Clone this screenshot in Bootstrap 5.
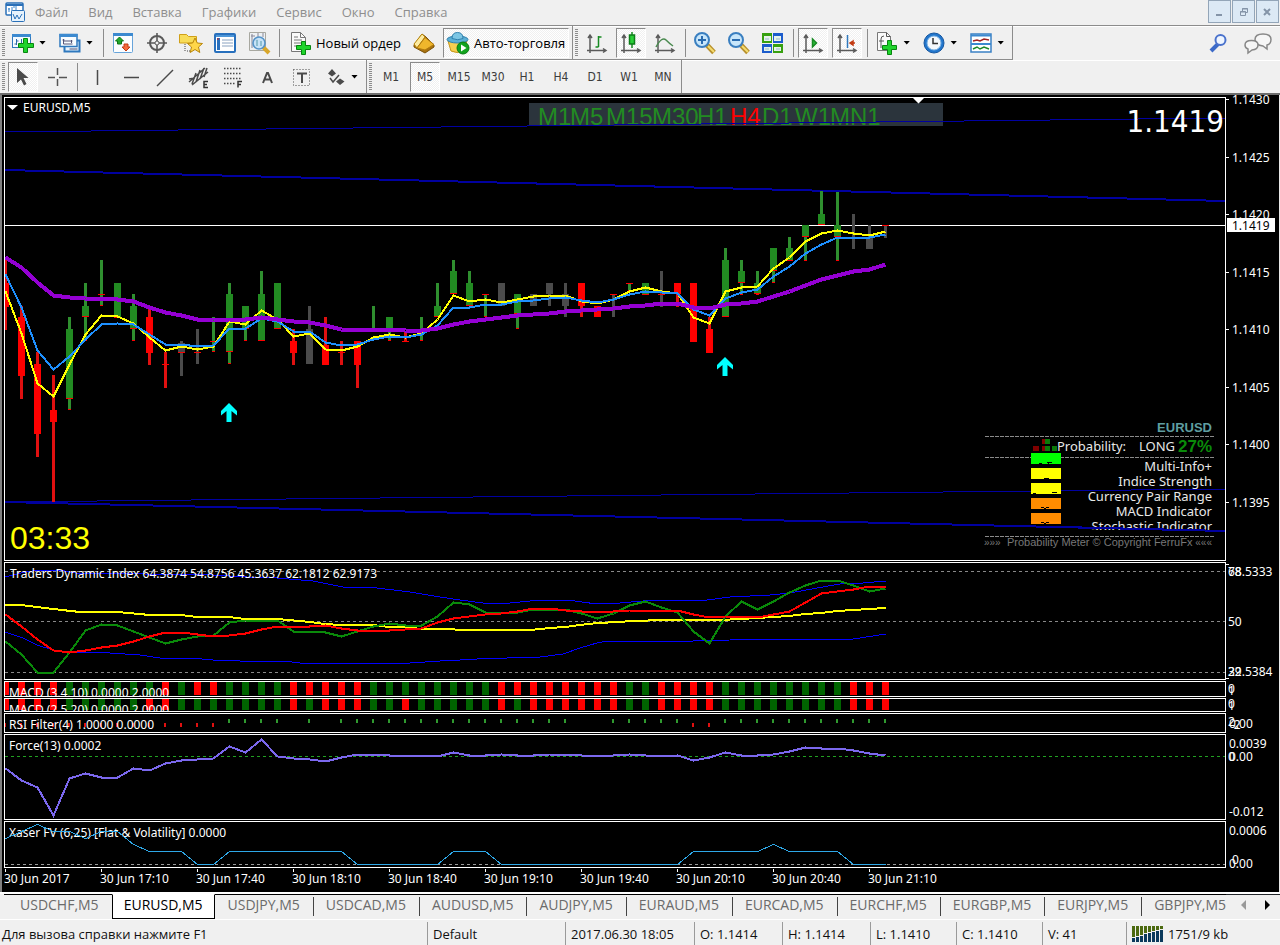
<!DOCTYPE html>
<html lang="ru">
<head>
<meta charset="utf-8">
<meta name="viewport" content="width=device-width, initial-scale=1">
<title>EURUSD,M5</title>
<link href="https://cdn.jsdelivr.net/npm/bootstrap@5.3.0/dist/css/bootstrap.min.css" rel="stylesheet">
<style>
  :root { --face: #f0f0f0; --edge: #8c8c8c; --ui: "Open Sans", "Noto Sans", sans-serif; --plot: "Noto Sans", sans-serif; --narrow: "DejaVu Sans Condensed", "Noto Sans", sans-serif; }
  body { background: var(--face); font-family: var(--ui); font-size: 13px; line-height: 20px; color: #111; }
  button { font: inherit; color: inherit; border: 0; background: none; padding: 0; }
  svg { display: block; flex: none; }

  .menu-bar { height: 26px; border-bottom: 1px solid var(--edge); padding: 0 1px 2px 5px; }
  .menu-bar a { color: #8e8e8e; text-decoration: none; padding: 0 10px; }
  .win-set { gap: 1px; }
  .win-btn { width: 23px; height: 23px; background: #dce9f5; border: 1px solid #93a5b8; color: #8494a8; }

  .tool-row { height: 34px; box-shadow: inset 0 1px #fff; }
  .tool-row.second { height: 35px; border-bottom: 2px solid #6c6c6c; }
  .tool-strip { height: 34px; border-right: 1px solid var(--edge); border-bottom: 1px solid var(--edge); padding: 0 1px 0 2px; }
  .second .tool-strip { height: 33px; border-bottom: 0; }
  .grip { width: 3px; height: 28px; margin-right: 1px; background: repeating-linear-gradient(#8c8c8c 0 1px, #f0f0f0 1px 2px); }
  .tool-strip + .tool-strip .grip { margin-right: 2px; }
  .tool-btn { width: 30px; height: 30px; margin: 0 2px; display: flex; align-items: center; justify-content: center; white-space: nowrap; }
  .tool-btn.drop { width: 43px; gap: 4px; justify-content: flex-start; padding-left: 3px; }
  .tool-btn.wide { width: auto; gap: 4px; padding: 0 4px 0 5px; }
  .tool-btn.pressed { border: 1px solid; border-color: #8c8c8c #fff #fff #8c8c8c; background: repeating-conic-gradient(#f0f0f0 0 25%, #fff 0 50%) 0 0 / 2px 2px; }
  .tool-btn.wide.pressed { padding: 0 3px 0 2px; }
  .tool-sep { width: 1px; height: 28px; margin: 0 2px 0 3px; background: var(--edge); }
  .caret { width: 7px; height: 4px; background: #000; clip-path: polygon(0 0, 100% 0, 50% 100%); }
  .order-text { font-size: 13px; color: #000; }
  .frame-btn { font-family: var(--narrow); font-size: 12px; color: #3c3c3c; }

  .terminal { background: #000; border-left: 2px solid #808080; border-right: 1px solid #e8e8e8; padding: 2px 0 0 2px; }
  .pane { margin-bottom: 1px; }
  .pane:last-of-type { margin-bottom: 0; }
  .plot { flex: 1 1 0; min-width: 0; border: 1px solid #fff; }
  .scale { width: 53px; overflow: visible; }
  .terminal text { font-family: var(--plot); font-size: 12px; fill: #fff; white-space: pre; }
  .terminal text.arial { font-family: "Liberation Sans", Arial, sans-serif; }
  .terminal text.quote { font-family: var(--narrow); font-size: 31px; }
  .terminal text.clock { font-size: 32px; fill: #ff0; }
  .terminal text.tf { font-size: 24px; fill: #228b22; }
  .terminal text.meter { font-size: 13px; fill: #e8e8e8; }
  .crisp { shape-rendering: crispEdges; }
  .dates { height: 23px; overflow: hidden; }
  .dates span { position: relative; flex: none; width: 96px; font-family: var(--plot); font-size: 12px; line-height: 20px; color: #fff; white-space: nowrap; }
  .dates span::before { content: ""; position: absolute; left: 1px; top: 0; width: 1px; height: 3px; background: #fff; }

  .tab-strip { border-top: 2px solid #fff; border-bottom: 1px solid #fff; height: 28px; overflow: hidden; }
  .chart-tab { border-top: 1px solid #000; height: 25px; padding: 0 13px 4px; color: #6b6b6b; font-size: 14px; line-height: 20px; position: relative; white-space: nowrap; }
  .chart-tab + .chart-tab::before { content: ""; position: absolute; left: 0; top: 2px; width: 1px; height: 19px; background: #444; }
  .chart-tab.active { background: #fff; color: #000; border: 1px solid #000; border-top-color: #fff; padding: 0 11px 3px; }
  .chart-tab.active::before, .chart-tab.active + .chart-tab::before { display: none; }
  .status { height: 26px; line-height: 24px; overflow: hidden; }
  .status > div { border-left: 1px solid #9a9a9a; padding-left: 5px; white-space: nowrap; height: 24px; }
  .status > div:first-child { border-left: 0; padding-left: 2px; }
  .w-def { width: 138px; } .w-time { width: 129px; } .w-val { width: 88px; } .w-low { width: 86px; } .w-vol { width: 84px; } .w-net { width: 154px; }
</style>
</head>
<body class="d-flex flex-column min-vh-100">

<nav class="menu-bar d-flex align-items-center">
  <svg width="20" height="22" viewBox="0 0 20 22"><rect x="1" y="2" width="17" height="12" rx="1" fill="#fff" stroke="#2a70b8" stroke-width="1.500"/><path d="M1 4h17" stroke="#2a70b8" stroke-width="2"/><path d="M4 7v4m3-5v5m4-6v5m-8-2h2m3-2h2" stroke="#3d86cc"/><rect x="6.500" y="9.500" width="13" height="11" rx="1" fill="#e6f2fc" stroke="#2a70b8"/><path d="M8 13l2 5 2-4 2 4 3-5" fill="none" stroke="#2a70b8"/></svg>
  <a href="#">Файл</a><a href="#">Вид</a><a href="#">Вставка</a><a href="#">Графики</a><a href="#">Сервис</a><a href="#">Окно</a><a href="#">Справка</a>
  <div class="win-set d-flex ms-auto">
    <button class="win-btn" aria-label="Свернуть"><svg width="21" height="21"><path d="M7 14h6" stroke="currentColor" stroke-width="2"/></svg></button>
    <button class="win-btn" aria-label="Восстановить"><svg width="21" height="21" fill="none" stroke="currentColor"><path d="M9.500 10V7.500h5v4H13M9 8h6"/><path d="M7.500 10.500h5v4h-5zM7 11h6"/></svg></button>
    <button class="win-btn" aria-label="Закрыть"><svg width="21" height="21"><path d="M7 8l6 6m0-6l-6 6" stroke="currentColor" stroke-width="2"/></svg></button>
  </div>
</nav>

<div class="tool-row d-flex">
  <div class="tool-strip d-flex align-items-center">
    <span class="grip"></span>
    <button class="tool-btn drop" aria-label="Новый график"><svg width="24" height="24"><rect x="1.500" y="3.500" width="18" height="13" fill="#f4faff" stroke="#2f78bd"/><path d="M1 4.500h19" stroke="#3c8ad0" stroke-width="3"/><path d="M5.500 8v6m-2-1h2m0-3h2M10.500 8v4" stroke="#2f6aa5"/><path d="M12.500 7.500h4v5h6v4h-6v5h-4v-5h-5v-4h5z" fill="#1fd42c" stroke="#07850f"/></svg><span class="caret"></span></button>
    <button class="tool-btn drop" aria-label="Профили"><svg width="24" height="24"><rect x="6.500" y="9.500" width="15" height="11" fill="#e8f3fd" stroke="#2f78bd" stroke-width="2"/><rect x="2" y="3.500" width="17" height="12" fill="#f8fcff" stroke="#2f78bd" stroke-width="1.500"/><path d="M1.500 4.500h18" stroke="#3c8ad0" stroke-width="3"/><path d="M5.500 8v5m-1-4h2m-1 4h9m-1-4v3m-8-2h9m-3 8h8" stroke="#557" fill="none"/></svg><span class="caret"></span></button>
    <span class="tool-sep"></span>
    <button class="tool-btn" aria-label="Обзор рынка"><svg width="24" height="24"><rect x="2.500" y="2.500" width="19" height="19" rx="1" fill="#fbfdff" stroke="#67a4da"/><path d="M2 3.500h20" stroke="#3c8ad0" stroke-width="3"/><path d="M8.500 6l4 4h-2v3h-4v-3h-2z" fill="#22a82e" stroke="#0c7415"/><path d="M15 20l4-4h-2v-3h-4v3h-2z" fill="#f46a3c" stroke="#c23a12"/></svg></button>
    <button class="tool-btn" aria-label="Навигация"><svg width="24" height="24" fill="none" stroke="#5a5a5a"><circle cx="12" cy="12" r="7" stroke-width="2"/><path d="M12 2v8m0 4v8M2 12h8m4 0h8" stroke-width="1.600"/><circle cx="12" cy="12" r="2"/></svg></button>
    <button class="tool-btn" aria-label="Навигатор"><svg width="26" height="24"><path d="M1.500 12V3.500h7l2 2h8V12z" fill="#f8dc58" stroke="#d0a018"/><path d="M7 13v8m2-1h4" stroke="#444" stroke-dasharray="1 1"/><path d="M17 7l2.300 5 5.200.5-4 3.500 1.300 5.500-4.800-3-4.800 3 1.300-5.500-4-3.500 5.200-.5z" fill="#ffd648" stroke="#b8860b"/></svg></button>
    <button class="tool-btn" aria-label="Терминал"><svg width="24" height="24"><rect x="2" y="3" width="20" height="18" rx="1" fill="#fff" stroke="#2870bd" stroke-width="2"/><path d="M3 5h18" stroke="#4d96d8" stroke-width="2"/><path d="M5.500 7v12" stroke="#2870bd" stroke-width="3"/><path d="M9 9h11M9 12h11M9 15h11" stroke="#8aa2c0"/><path d="M4 8h2" stroke="#c22"/></svg></button>
    <button class="tool-btn" aria-label="Тестер стратегий"><svg width="24" height="24"><path d="M2.500 1.500h16v18h-16z" fill="#eef1f3" stroke="#a8a8a0"/><path d="M4 5h4m-1 4h4M5 3v14m6-15v5m5-5v4" stroke="#889"/><path d="M16 16l6 6" stroke="#d9a72b" stroke-width="4"/><circle cx="12" cy="12" r="6" fill="#bfe0f7" fill-opacity=".85" stroke="#5593c8" stroke-width="1.600"/><path d="M10 9v6m4-5v5" stroke="#59a"/></svg></button>
    <span class="tool-sep"></span>
    <button class="tool-btn wide"><svg width="23" height="24"><path d="M2.500 1.500h9l5 5v14h-14z" fill="#fafafa" stroke="#777"/><path d="M11.500 1.500v5h5M5 6h4M5 9h8M5 12h7M5 15h4" fill="none" stroke="#777"/><path d="M12.500 10.500h4v4h5v4h-5v5h-4v-5h-5v-4h5z" fill="#1fd42c" stroke="#07850f"/></svg><span class="order-text">Новый ордер</span></button>
    <button class="tool-btn" aria-label="MetaEditor"><svg width="24" height="24"><path d="M2 14l8-11 4 3 8 8v2l-9 6-11-6z" fill="#a8720f" stroke="#7c5208"/><path d="M2 13L10 3l3 3-8 11z" fill="#fdeba0" stroke="#b8860b"/><path d="M5 17l8-10.500 9 7L13 19z" fill="#efb62c" stroke="#b07a10"/></svg></button>
    <button class="tool-btn wide pressed"><svg width="24" height="24"><path d="M2 10l3 10q6 3 12 0l4-10z" fill="#f7cf50" stroke="#c4941c"/><ellipse cx="11.500" cy="8.500" rx="10.500" ry="3.500" fill="#5bb0d6" stroke="#3080ad"/><path d="M6 7.500q0-6 5.500-6t5.500 6q-5 2.500-11 0z" fill="#7cc6e4" stroke="#3080ad"/><circle cx="17" cy="17" r="6" fill="#12a31e" stroke="#077b10"/><path d="M15 13.500v7l5.500-3.500z" fill="#fff"/></svg><span class="order-text">Авто-торговля</span></button>
  </div>
  <div class="tool-strip d-flex align-items-center">
    <span class="grip"></span>
    <button class="tool-btn" aria-label="Бары"><svg width="24" height="24" fill="none" stroke="#5a5a5a" stroke-width="1.500"><path d="M5 5v17M2 19.500h18M3 7l2-3 2 3M18 17.500l3 2-3 2"/><path d="M13.500 5v11m-3 0h3m0-10h3" stroke="#178a22"/></svg></button>
    <button class="tool-btn pressed" aria-label="Свечи"><svg width="24" height="24" fill="none" stroke="#5a5a5a" stroke-width="1.500"><path d="M5 5v17M2 19.500h18M3 7l2-3 2 3M18 17.500l3 2-3 2"/><path d="M13 1v16" stroke="#178a22"/><rect x="10.500" y="4" width="5" height="9" fill="#2ad038" stroke="#0c7d18"/></svg></button>
    <button class="tool-btn" aria-label="Линия"><svg width="24" height="24" fill="none" stroke="#5a5a5a" stroke-width="1.500"><path d="M5 5v17M2 19.500h18M3 7l2-3 2 3M18 17.500l3 2-3 2"/><path d="M3 16Q9 5 13 9t7 6" stroke="#4a8a50"/></svg></button>
    <span class="tool-sep"></span>
    <button class="tool-btn" aria-label="Увеличить"><svg width="24" height="24"><path d="M14 14l7 7.500" stroke="#b8902c" stroke-width="5"/><path d="M15 15l6 6" stroke="#f5dc70" stroke-width="2"/><circle cx="9" cy="9" r="7" fill="#c8e6fa" stroke="#3a7fc0" stroke-width="2"/><path d="M5 9h8M9 5v8" stroke="#2a6cb0" stroke-width="2"/></svg></button>
    <button class="tool-btn" aria-label="Уменьшить"><svg width="24" height="24"><path d="M14 14l7 7.500" stroke="#b8902c" stroke-width="5"/><path d="M15 15l6 6" stroke="#f5dc70" stroke-width="2"/><circle cx="9" cy="9" r="7" fill="#c8e6fa" stroke="#3a7fc0" stroke-width="2"/><path d="M5 9h8" stroke="#2a6cb0" stroke-width="2"/></svg></button>
    <button class="tool-btn" aria-label="Упорядочить окна"><svg width="24" height="24"><path d="M1 2h10v10H1zM12 13h10v9H12z" fill="#37a010"/><path d="M12 2h10v10H12zM1 13h10v9H1z" fill="#1c5ccc"/><path d="M3 5h7v5H3zM13 5h7v5h-7zM3 16h7v4H3zM13 16h7v4h-7z" fill="#e6f2ea"/><path d="M4 8h4m7 0h4M4 18h4m7 0h4" stroke="#9bc"/></svg></button>
    <span class="tool-sep"></span>
    <button class="tool-btn pressed" aria-label="Автопрокрутка"><svg width="24" height="24" fill="none" stroke="#5a5a5a" stroke-width="1.500"><path d="M5 5v17M2 19.500h18M3 7l2-3 2 3M18 17.500l3 2-3 2"/><path d="M11.500 8v8l4-4z" fill="#2ab838" stroke="#178a22"/></svg></button>
    <button class="tool-btn pressed" aria-label="Сдвиг графика"><svg width="24" height="24" fill="none" stroke="#5a5a5a" stroke-width="1.500"><path d="M5 5v17M2 19.500h18M3 7l2-3 2 3M18 17.500l3 2-3 2"/><path d="M12.500 4v13" stroke="#2f78bd"/><path d="M20 12h-5m3-2l-3 2 3 2z" fill="#c23a12" stroke="#c23a12"/></svg></button>
    <span class="tool-sep"></span>
    <button class="tool-btn drop" aria-label="Индикаторы"><svg width="24" height="24"><path d="M2.500 1.500h9l4 4v14h-13z" fill="#fafafa" stroke="#777"/><path d="M11.500 1.500v4h4M6 17V8q0-3 3-3M4 10h5" fill="none" stroke="#555"/><path d="M12.500 9.500h4v5h5v4h-5v5h-4v-5h-5v-4h5z" fill="#1fd42c" stroke="#07850f"/></svg><span class="caret"></span></button>
    <button class="tool-btn drop" aria-label="Периоды"><svg width="24" height="24"><circle cx="12" cy="12" r="10" fill="#2276cc" stroke="#1757a0"/><circle cx="12" cy="12" r="7" fill="#f4f8fc" stroke="#7db4e6"/><path d="M11 7v5.500h5" fill="none" stroke="#333" stroke-width="1.500"/></svg><span class="caret"></span></button>
    <button class="tool-btn drop" aria-label="Шаблоны"><svg width="24" height="24"><rect x="2" y="3" width="20" height="18" fill="#fff" stroke="#3a80c4" stroke-width="1.500"/><path d="M2 4.500h20M2 13h20" stroke="#3c8ad0" stroke-width="2"/><path d="M4 10l4-1 3 1 4-2 5 1" fill="none" stroke="#a02020" stroke-width="1.500"/><path d="M4 18l4-2 3 2 4-2 5 2" fill="none" stroke="#1c8a28" stroke-width="1.500"/></svg><span class="caret"></span></button>
  </div>
  <div class="ms-auto d-flex align-items-center me-2 gap-3">
    <button aria-label="Поиск"><svg width="20" height="22"><path d="M10 12l-7 7" stroke="#3c6ac8" stroke-width="4"/><circle cx="12.500" cy="8" r="5" fill="#eef5ff" stroke="#4a72cc" stroke-width="2"/></svg></button>
    <button aria-label="Чат"><svg width="28" height="24" fill="#f6f6f6" stroke="#888" stroke-width="1.500"><path d="M19 15l4 3v-4q4-1 4-5.500Q27 3 19 3t-8 5.500T19 15z"/><path d="M8 19l-4 3v-4q-3-1-3-4 0-4.500 6.500-4.500T14 14t-6 5z"/></svg></button>
  </div>
</div>

<div class="tool-row second d-flex">
  <div class="tool-strip d-flex align-items-center">
    <span class="grip"></span>
    <button class="tool-btn pressed" aria-label="Курсор"><svg width="24" height="24"><path d="M6 3v15l4-3.500 3 6 2.500-1.500-3-6h5z" fill="#4a4a4a"/></svg></button>
    <button class="tool-btn" aria-label="Перекрестие"><svg width="24" height="24"><path d="M12.500 3v7m0 4v7M3 12.500h7m4 0h8" stroke="#555" stroke-width="1.500"/></svg></button>
    <span class="tool-sep"></span>
    <button class="tool-btn" aria-label="Вертикальная линия"><svg width="24" height="24"><path d="M12.500 5v15" stroke="#4a4a4a" stroke-width="1.500"/></svg></button>
    <button class="tool-btn" aria-label="Горизонтальная линия"><svg width="24" height="24"><path d="M5 12.500h15" stroke="#4a4a4a" stroke-width="1.500"/></svg></button>
    <button class="tool-btn" aria-label="Трендовая линия"><svg width="24" height="24"><path d="M4 21L20 5" stroke="#4a4a4a" stroke-width="1.500"/></svg></button>
    <button class="tool-btn" aria-label="Канал"><svg width="24" height="24"><path d="M2 17L18 3M5 20L21 7M9 8l-4 11M13 5L9 17m8-14l-4 11m7-11l-3 9M2 14l6-1" stroke="#4a4a4a" stroke-width="1.500" fill="none"/><path d="M21 16.500h-4v6h4m-4-3h3" stroke="#333" stroke-width="1.500" fill="none"/></svg></button>
    <button class="tool-btn" aria-label="Фибоначчи"><svg width="24" height="24"><path d="M3 3.500h17M3 8.500h17M3 13.500h17M3 18.500h11" stroke="#4a4a4a" stroke-width="1.500" stroke-dasharray="1.500 1.500"/><path d="M21 16.500h-4v6m0-3h3" stroke="#333" stroke-width="1.500" fill="none"/></svg></button>
    <button class="tool-btn" aria-label="Текст"><svg width="24" height="24"><path d="M8 18l4-10h1l4 10M9.500 14.500h6" stroke="#4a4a4a" stroke-width="2" fill="none"/></svg></button>
    <button class="tool-btn" aria-label="Метка"><svg width="24" height="24"><rect x="4.500" y="4.500" width="16" height="16" fill="none" stroke="#4a4a4a" stroke-dasharray="1 2"/><path d="M8 8.500h10M13 8v10" stroke="#4a4a4a" stroke-width="2"/></svg></button>
    <button class="tool-btn drop" aria-label="Стрелки"><svg width="24" height="24"><path d="M9 4l4 4.500-4 3-4-3zM17 20l-4-3.500 4-3 4.500 3z" fill="#4a4a4a"/><path d="M7 13l3 4 6-7" fill="none" stroke="#4a4a4a" stroke-width="1.500"/></svg><span class="caret"></span></button>
  </div>
  <div class="tool-strip d-flex align-items-center">
    <span class="grip"></span>
    <button class="tool-btn frame-btn">M1</button><button class="tool-btn frame-btn pressed">M5</button><button class="tool-btn frame-btn">M15</button><button class="tool-btn frame-btn">M30</button><button class="tool-btn frame-btn">H1</button><button class="tool-btn frame-btn">H4</button><button class="tool-btn frame-btn">D1</button><button class="tool-btn frame-btn">W1</button><button class="tool-btn frame-btn">MN</button>
  </div>
</div>

<main class="terminal">
  <!-- every pane draws in one shared coordinate space; each group is shifted to its own frame -->
  <div class="pane d-flex"><svg class="plot" height="464"><g id="price" transform="translate(-5,-98)"></g>
    <svg x="100%" width="1" height="100%" overflow="visible"><g id="meter" transform="translate(-1225,-98)"></g></svg></svg>
    <svg class="scale" height="464"><g id="priceScale" transform="translate(-1226,-97)"></g></svg></div>
  <div class="pane d-flex"><svg class="plot" height="118"><g id="tdi" transform="translate(-5,-563)"></g></svg><svg class="scale" height="118"><g id="tdiScale" transform="translate(-1226,-562)"></g></svg></div>
  <div class="pane d-flex"><svg class="plot" height="16"><g id="macdA" transform="translate(-5,-682)"></g></svg><svg class="scale" height="16"><g id="macdAScale" transform="translate(-1226,-681)"></g></svg></div>
  <div class="pane d-flex"><svg class="plot" height="14"><g id="macdB" transform="translate(-5,-699)"></g></svg><svg class="scale" height="14"><g id="macdBScale" transform="translate(-1226,-698)"></g></svg></div>
  <div class="pane d-flex"><svg class="plot" height="20"><g id="rsi" transform="translate(-5,-714)"></g></svg><svg class="scale" height="20"><g id="rsiScale" transform="translate(-1226,-713)"></g></svg></div>
  <div class="pane d-flex"><svg class="plot" height="86"><g id="force" transform="translate(-5,-735)"></g></svg><svg class="scale" height="86"><g id="forceScale" transform="translate(-1226,-734)"></g></svg></div>
  <div class="pane d-flex"><svg class="plot" height="47"><g id="xaser" transform="translate(-5,-822)"></g></svg><svg class="scale" height="47"><g id="xaserScale" transform="translate(-1226,-821)"></g></svg></div>
  <div class="dates d-flex"><span>30 Jun 2017</span><span>30 Jun 17:10</span><span>30 Jun 17:40</span><span>30 Jun 18:10</span><span>30 Jun 18:40</span><span>30 Jun 19:10</span><span>30 Jun 19:40</span><span>30 Jun 20:10</span><span>30 Jun 20:40</span><span>30 Jun 21:10</span></div>
</main>

<div class="tab-strip d-flex" role="tablist">
  <button class="chart-tab ps-3 ms-1">USDCHF,M5</button><button class="chart-tab active">EURUSD,M5</button><button class="chart-tab">USDJPY,M5</button><button class="chart-tab">USDCAD,M5</button><button class="chart-tab">AUDUSD,M5</button><button class="chart-tab">AUDJPY,M5</button><button class="chart-tab">EURAUD,M5</button><button class="chart-tab">EURCAD,M5</button><button class="chart-tab">EURCHF,M5</button><button class="chart-tab">EURGBP,M5</button><button class="chart-tab">EURJPY,M5</button><button class="chart-tab pe-0">GBPJPY,M5</button>
  <div class="flex-fill d-flex align-items-center justify-content-end border-top border-dark gap-3 pb-1 pe-2">
    <button aria-label="Назад"><svg width="8" height="10"><path d="M6 0v10L1 5z" fill="#999"/></svg></button>
    <button aria-label="Вперёд"><svg width="8" height="10"><path d="M1 0v10l5-5z" fill="#000"/></svg></button>
  </div>
</div>

<footer class="status d-flex align-items-end">
  <div class="flex-fill">Для вызова справки нажмите F1</div>
  <div class="w-def">Default</div><div class="w-time">2017.06.30 18:05</div><div class="w-val">O: 1.1414</div><div class="w-val">H: 1.1414</div><div class="w-low">L: 1.1410</div><div class="w-low">C: 1.1410</div><div class="w-vol">V: 41</div>
  <div class="w-net d-flex align-items-center gap-1"><svg width="32" height="18" id="net"></svg><span>1751/9 kb</span></div>
</footer>

<script src="https://cdn.jsdelivr.net/npm/bootstrap@5.3.0/dist/js/bootstrap.bundle.min.js"></script>
<script>
const $ = id => document.getElementById(id);
const put = (id, html) => $(id).insertAdjacentHTML('beforeend', html);
const rect = (x, y, w, h, f) => `<rect class="crisp" x="${x}" y="${y}" width="${w}" height="${h}" fill="${f}"/>`;
const poly = (pts, c, w) => `<polyline class="crisp" points="${pts.join(' ')}" fill="none" stroke="${c}" stroke-width="${w}"/>`;
const text = (x, y, s, cls = '', extra = '') => `<text x="${x}" y="${y}" class="${cls}" ${extra}>${s}</text>`;
const series = ys => ys.map((y, i) => `${5.5 + 16 * i},${y + .5}`);
const line = (x1, y1, x2, y2, c, w) => `<line class="crisp" x1="${x1}" y1="${y1}" x2="${x2}" y2="${y2}" stroke="${c}" stroke-width="${w}"/>`;
const level = (y, c) => `<line class="crisp" x1="5" y1="${y + .5}" x2="6000" y2="${y + .5}" stroke="${c}" stroke-dasharray="3 3"/>`;
const G = '#228b22', R = '#ff0000', K = '#4b4b4b';

/* colour, wick top, wick bottom, body top, body bottom, dash */
const candles = [
 [R,260,330,283,307],[R,306,399,317,376],[R,352,457,364,434],[R,375,502,410,422],[G,317,410,329,399],[G,283,341,306,317],[G,260,306,0,0,294],[G,283,318,283,318],
 [G,294,341,306,329],[R,309,365,317,353],[R,352,388,0,0,364],[K,341,376,343,352,352],[K,329,364,0,0,352],[G,317,352,0,0,341],[G,283,364,294,352],[G,306,341,306,329],
 [G,271,341,294,341],[G,283,329,283,329],[R,329,365,341,353],[K,306,364,329,364],[R,317,365,345,365],[R,341,365,0,0,352],[R,341,388,341,365],[G,306,329],
 [G,317,341,317,329],[R,331,341,0,0,341],[G,317,341],[G,283,317,306,317],[G,260,294,271,294],[G,271,306,283,306],[G,294,317,0,0,294],[K,283,306,283,306],
 [G,294,329,294,314],[K,294,306,294,306],[K,283,306,283,294],[K,283,317,294,306],[R,283,317,283,306],[R,306,317,306,317],[K,294,317,0,0,294],[G,283,291,0,0,283],
 [G,283,295,283,295],[K,271,307,0,0,294],[R,283,307,283,294],[R,283,342,283,342],[R,317,353,329,353],[G,248,317,260,317],[G,260,295,271,283],[G,271,295,283,294],
 [G,248,283,248,271],[G,237,261,248,261],[G,225,261,225,237],[G,191,225,214,225],[G,192,261,225,237],[K,214,249],[K,225,249,237,249],[K,225,238,0,0,225]];

let s = rect(529, 103, 414, 23, '#2b343c');
[[538,'M1'],[570,'M5'],[606,'M15'],[652,'M30'],[697,'H1'],[730,'H4'],[762,'D1'],[795,'W1'],[830,'MN1']].forEach(([x, t]) =>
  s += text(x, 125, t, 'arial tf', t === 'H4' ? 'style="fill:#f00"' : ''));
s += line(5, 132, 1225, 118, '#0000a0', 1) + line(5, 170, 1225, 201, '#0000a0', 2) + line(5, 502, 1225, 489, '#0000a0', 1) + line(5, 502, 1225, 531, '#0000a0', 2);
s += rect(5, 225, 6000, 1, '#fff');
candles.forEach(([c, a, b, t, u, d], i) => {
  const x = 5 + 16 * i, wick = c === R ? '#e01010' : c === G ? '#2f8f2f' : c;
  s += rect(x - 1, a, 3, b - a, wick);
  if (t) s += rect(x - 3, t, 7, u - t, c);
  if (c === G && t) s += rect(x - 3, u - 1, 7, 1, R);
  if (c === G) s += rect(x - 1, b - 1, 3, 1, R);
  if (d) s += rect(x - 3, d, 7, 1, R);
});
s += poly(series([291,333,383,396,364,334,315,316,323,337,350,346,349,346,321,324,310,319,336,333,349,350,346,337,334,337,333,319,295,301,299,302,299,296,295,295,301,303,299,291,287,291,293,317,323,291,287,286,268,257,241,233,230,233,235,231]), '#ffff00', 2);
s += poly(series([274,307,350,369,356,339,324,323,324,334,344,344,346,345,328,328,318,321,331,331,342,345,344,339,336,337,334,325,307,307,304,304,301,300,298,297,300,302,299,294,291,292,293,309,315,298,292,289,276,266,253,244,237,237,237,234]), '#1e90ff', 2);
s += poly(series([257,267,282,295,297,298,298,299,301,307,312,315,319,320,319,319,317,319,321,322,325,329,329,329,329,330,330,328,324,321,319,317,315,314,313,311,310,309,308,306,305,303,303,307,308,304,303,301,296,291,285,279,275,271,269,264]), '#9400d3', 4);
[[229,403],[725,357]].forEach(([x, y]) => s += `<path d="M${x} ${y}l8 8v4.500l-5.500-4.500v11h-5v-11l-5.500 4.500v-4.500z" fill="#0ff"/>`);
s += '<path d="M7 105h11l-5.500 5z M913 98h11l-5.500 5.500z" fill="#fff"/>' + text(23, 112, 'EURUSD,M5') + text(10, 549, '03:33', 'arial clock');
put('price', s);

/* probability meter and big quote, anchored to the right edge */
const end = 'text-anchor="end"';
s = text(1224, 132, '1.1419', 'quote', end);
s += text(1212, 432, 'EURUSD', 'arial meter', end + ' font-weight="700" style="fill:#5f9ea0"');
[436, 457, 536].forEach(y => s += `<line class="crisp" x1="985" x2="1214" y1="${y + .5}" y2="${y + .5}" stroke="#8a8a8a" stroke-dasharray="4 1"/>`);
s += rect(1033,446,6,5,'#800000') + rect(1042,439,3,5,'#800000') + rect(1045,439,5,5,'#0a7a0a') + rect(1042,446,3,5,'#800000') + rect(1045,446,5,5,'#0a7a0a') + rect(1052,446,5,5,'#0a7a0a');
[['#0f0',453],['#ff0',468],['#ff0',483],['#ff8c00',498],['#ff8c00',513]].forEach(([c, y]) => s += rect(1031, y, 30, 11, c));
s += '<path class="crisp" d="M1039 463h3m5-1h5m-4 1v1M1044 478h5m-5 1v1M1033 493h3m16-1h5M1041 507h3m2 0h3m-5 1h2M1041 522h3m2 0h3m-5 1h2" stroke="#000"/>';
s += text(1057, 451, 'Probability:', 'meter') + text(1175, 451, 'LONG', 'meter', end) + text(1212, 452, '27%', 'arial', end + ' font-weight="700" style="fill:#0a8a0a;font-size:17px"');
s += '<clipPath id="cut"><rect x="1000" y="400" width="225" height="130"/></clipPath>';
['Multi-Info+','Indice Strength','Currency Pair Range','MACD Indicator'].forEach((t, i) => s += text(1212, 471 + 15 * i, t, 'meter', end));
s += `<g clip-path="url(#cut)">${text(1212, 531, 'Stochastic Indicator', 'meter', end)}</g>`;
s += text(984, 546, '»»»', 'arial', 'style="fill:#777;font-size:10px"') + text(1212, 546, '«««', 'arial', end + ' style="fill:#777;font-size:10px"');
s += text(1007, 546, 'Probability Meter © Copyright FerruFx', 'arial', 'style="fill:#777;font-size:11px"');
s += line(1061, 527, 1225, 531, '#0000a0', 2);
put('meter', s);

const tick = y => rect(1226, y, 3, 1, '#fff');
s = '';
['1.1430','1.1425','1.1420','1.1415','1.1410','1.1405','1.1400','1.1395'].forEach((t, i) => { const y = Math.round(100 + 57.5 * i); s += tick(y - 1) + text(1232, y + 4, t); });
s += rect(1227, 218, 48, 14, '#fff') + text(1232, 230, '1.1419', '', 'style="fill:#000"');
put('priceScale', s);

put('tdi', level(571,'#888') + level(621,'#888') + level(672,'#888') +
 poly(['5,577','21,573','37,570','60,570','75,573','213,575','247,577','277,578','313,581','343,587','377,588','410,592','440,597','460,600','483,603','510,603','540,600','567,600','597,604','620,603','643,601','670,600','707,600','730,597','770,595','790,593','817,588','840,584','863,583','886,581'], '#0000ff', 1) +
 poly(['5,632','23,638','37,645','53,650','69,652','110,653','140,655','160,658','190,658','213,660','240,661','283,661','300,663','410,663','440,661','460,660','477,659','507,658','540,657','563,654','580,648','597,643','607,641','680,641','693,641','730,640','750,639','797,639','823,640','853,639','886,634'], '#0000ff', 1) +
 poly(['5,605','21,605','53,609','80,612','117,612','150,615','181,615','197,617','229,617','245,619','277,619','310,622','325,624','341,625','373,625','389,627','405,627','421,629','450,629','460,630','530,630','550,628','565,627','580,625','597,623','620,622','630,621','667,620','720,620','741,619','757,618','789,616','805,614','821,613','837,611','853,610','869,609','886,608'], '#ffff00', 2) +
 poly(series([641,654,672,672,652,630,624,625,631,637,643,639,636,635,622,620,620,620,631,631,632,636,631,626,623,625,625,616,602,604,612,612,612,609,609,609,613,618,613,605,601,607,612,631,643,616,601,609,601,592,585,580,580,585,591,588]), '#0a8a0a', 2) +
 poly(series([614,626,639,650,652,650,647,645,641,636,632,632,634,636,635,633,629,626,626,626,625,628,630,630,630,629,628,622,618,616,614,613,611,608,608,610,611,612,611,610,610,610,610,614,617,616,616,617,614,611,602,593,591,589,586,586]), '#ff0000', 2) +
 text(10, 578, 'Traders Dynamic Index 64.3874 54.8756 45.3637 62.1812 62.9173'));
put('tdiScale', tick(564) + tick(678) + text(1228,576,'78.5333') + text(1228,576,'68') + text(1228,626,'50') + text(1228,676,'29.5384') + text(1228,676,'32'));

const blocks = (str, y, h) => [...str].map((c, i) => rect(2 + 16 * i, y, 7, h, c === 'R' ? R : '#006400')).join('');
put('macdA', blocks('RRRRGGGGGGRGRRGGGGRRRRRGGGGGGGGRRRRRRRRGGRRRRGGGGGGGGRRR', 682, 13) + text(9, 697, 'MACD (3,4,10) 0.0000 2.0000'));
put('macdB', blocks('RRRRGGGGGRRGGGGGGGRGRRRGGRGGGGGRGRRRRRRGGRRRRGGGGGGGGRRR', 699, 11) + text(9, 714, 'MACD (2,5,20) 0.0000 2.0000'));
put('macdAScale', text(1228,693,'0') + text(1228,695,'1'));
put('macdBScale', text(1228,708,'0') + text(1228,710,'1'));
put('rsi', [...'RRRRRRRRRRRRRRGGGG-G-GGGGGGGGGGGGGGG--GGGGGRRGGGGGGGGGGG'].map((c, i) => c === '-' ? '' : rect(4 + 16 * i, c === 'R' ? 723 : 719, 2, 4, c === 'R' ? '#e01010' : '#2f9a2f')).join('') + text(9, 729, 'RSI Filter(4) 1.0000 0.0000'));
put('rsiScale', text(1229,728,'0.00') + text(1228,726,'2') + text(1230,729,'-2'));
put('force', level(756,'#22a022') +
 poly(series([768,780,787,815,778,773,777,777,768,770,763,760,759,758,746,752,739,756,758,759,761,757,754,754,755,755,755,756,752,755,755,754,755,755,754,754,755,756,755,754,755,756,755,760,757,752,755,755,754,751,747,748,748,750,753,755]), '#7b68ee', 2) + text(9, 750, 'Force(13) 0.0002'));
put('forceScale', text(1229,748,'0.0039') + text(1229,761,'0.00') + text(1228,761,'0') + text(1229,816,'-0.012'));
put('xaser', level(864,'#999') + text(9, 837, 'Xaser FV (6,25) [Flat &amp; Volatility] 0.0000') +
 poly(series([838,831,824,831,831,838,831,831,844,851,851,851,864,864,851,851,851,851,851,851,851,851,864,864,864,864,864,864,851,851,851,864,864,864,864,864,864,864,864,864,864,864,864,851,851,851,851,851,844,851,851,851,851,864,864,864]), '#2ea8e8', 1));
put('xaserScale', text(1229,835,'0.0006') + text(1229,868,'0.00') + text(1232,864,'0'));

/* connection gauge */
s = '';
for (let i = 0; i < 8; i++) { const h = Math.round(4 + i * 1.2); s += rect(i * 4, 1, 3, 15 - h, '#4c6a10') + rect(i * 4, 17 - h, 3, h, '#0b3a5c'); }
put('net', s);
</script>
</body>
</html>
